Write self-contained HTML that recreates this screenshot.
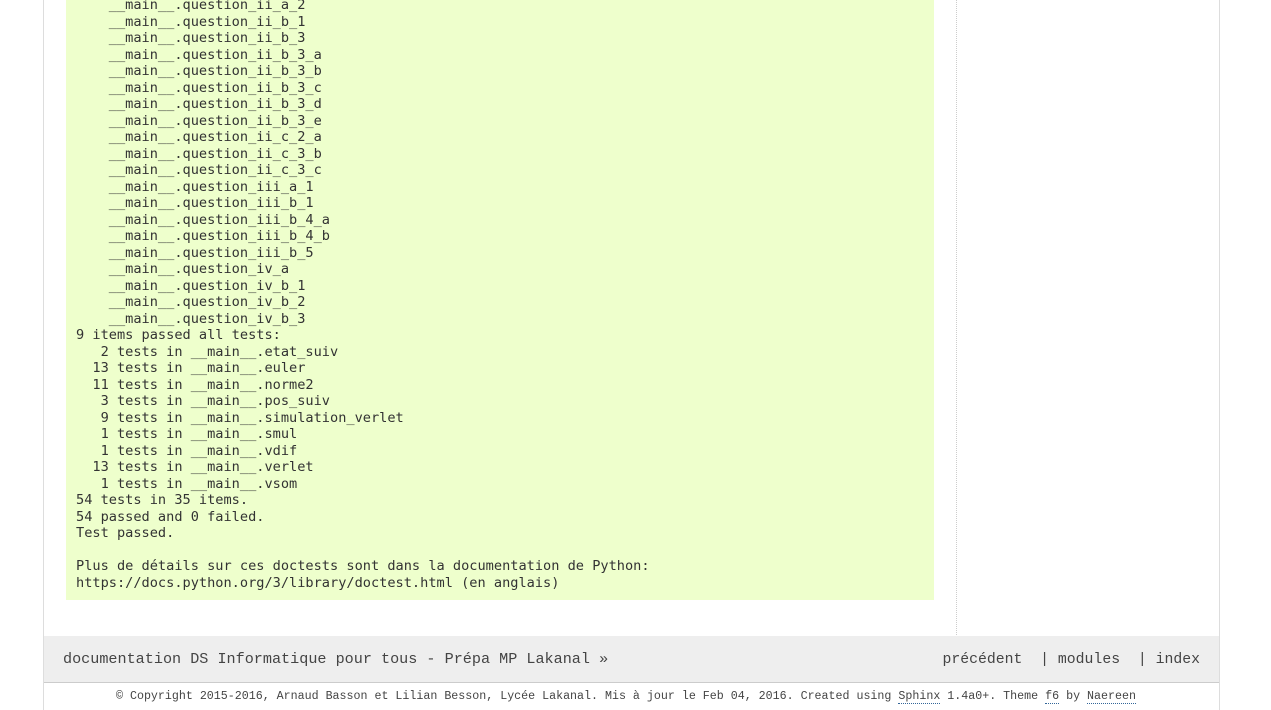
<!DOCTYPE html>
<html><head><meta charset="utf-8"><style>
html,body{margin:0;padding:0;background:#fff;width:1271px;height:710px;overflow:hidden;position:relative}
.wrap{position:absolute;left:43px;top:0;width:1175px;height:710px;border-left:1px solid #ddd;border-right:1px solid #ddd}
pre{position:absolute;left:66px;top:-13px;width:848px;margin:0;padding:10px 10px 10px 10px;background:#eeffcc;font-family:"DejaVu Sans Mono",monospace;font-size:13.62px;line-height:16.5px;color:#333;height:593px;box-sizing:content-box}
.vline{position:absolute;left:956px;top:0;height:635px;border-left:1px dotted #ccc}
.nav{position:absolute;left:44px;top:636px;width:1175px;height:46px;background:#eeeeee;border-bottom:1px solid #ccc;font-family:"Liberation Mono",monospace;font-size:15.15px;color:#444}
.nav .l{position:absolute;left:19px;top:14px}
.nav .r{position:absolute;right:19px;top:16px;white-space:pre;font-size:14.8px}
.foot{position:absolute;left:116px;top:690px;white-space:pre;font-family:"Liberation Mono",monospace;font-size:11.65px;color:#444}
.foot span{border-bottom:1px dotted #369}
</style></head><body>
<div class="wrap"></div>
<pre>    __main__.question_ii_a_2
    __main__.question_ii_b_1
    __main__.question_ii_b_3
    __main__.question_ii_b_3_a
    __main__.question_ii_b_3_b
    __main__.question_ii_b_3_c
    __main__.question_ii_b_3_d
    __main__.question_ii_b_3_e
    __main__.question_ii_c_2_a
    __main__.question_ii_c_3_b
    __main__.question_ii_c_3_c
    __main__.question_iii_a_1
    __main__.question_iii_b_1
    __main__.question_iii_b_4_a
    __main__.question_iii_b_4_b
    __main__.question_iii_b_5
    __main__.question_iv_a
    __main__.question_iv_b_1
    __main__.question_iv_b_2
    __main__.question_iv_b_3
9 items passed all tests:
   2 tests in __main__.etat_suiv
  13 tests in __main__.euler
  11 tests in __main__.norme2
   3 tests in __main__.pos_suiv
   9 tests in __main__.simulation_verlet
   1 tests in __main__.smul
   1 tests in __main__.vdif
  13 tests in __main__.verlet
   1 tests in __main__.vsom
54 tests in 35 items.
54 passed and 0 failed.
Test passed.

Plus de détails sur ces doctests sont dans la documentation de Python:
https://docs.python.org/3/library/doctest.html (en anglais)</pre>
<div class="vline"></div>
<div class="nav"><div class="l">documentation DS Informatique pour tous - Prépa MP Lakanal  »</div><div class="r">précédent  | modules  | index</div></div>
<div class="foot">© Copyright 2015-2016, Arnaud Basson et Lilian Besson, Lycée Lakanal. Mis à jour le Feb 04, 2016. Created using <span>Sphinx</span> 1.4a0+. Theme <span>f6</span> by <span>Naereen</span></div>
</body></html>
